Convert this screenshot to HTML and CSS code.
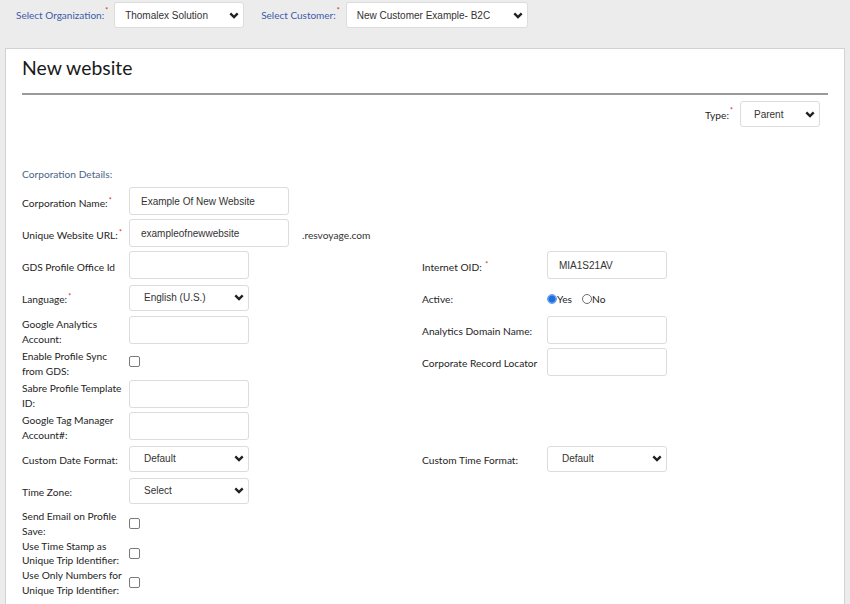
FILE: index.html
```html
<!DOCTYPE html>
<html>
<head>
<meta charset="utf-8">
<link rel="stylesheet" href="styles.css">
</head>
<body>
<div class="topbar">
  <span class="top-label">Select Organization:<sup class="req">*</sup></span>
  <select class="sel sel-top sel-org"><option>Thomalex Solution</option></select>
  <span class="top-label top-label-2">Select Customer:<sup class="req">*</sup></span>
  <select class="sel sel-top sel-cust"><option>New Customer Example- B2C</option></select>
</div>

<div class="card">
  <h1 class="title">New website</h1>
  <div class="rule"></div>

  <div class="type-row">
    <span class="type-lbl">Type:<sup class="req">*</sup></span>
    <select class="sel sel-type"><option>Parent</option></select>
  </div>

  <div class="section-title">Corporation Details:</div>

  <div class="form">
    <div class="row">
      <div class="lbl">Corporation Name:<sup class="req">*</sup></div>
      <div class="field"><input class="inp inp-wide" type="text" value="Example Of New Website"></div>
    </div>
    <div class="row">
      <div class="lbl">Unique Website URL:<sup class="req">*</sup></div>
      <div class="field"><input class="inp inp-wide" type="text" value="exampleofnewwebsite"><span class="suffix">.resvoyage.com</span></div>
    </div>
    <div class="row">
      <div class="lbl">GDS Profile Office Id</div>
      <div class="field"><input class="inp" type="text"></div>
      <div class="lbl">Internet OID: <sup class="req">*</sup></div>
      <div class="field"><input class="inp" type="text" value="MIA1S21AV"></div>
    </div>
    <div class="row">
      <div class="lbl">Language:<sup class="req">*</sup></div>
      <div class="field"><select class="sel sel-form"><option>English (U.S.)</option></select></div>
      <div class="lbl">Active:</div>
      <div class="field radios">
        <label class="radio-opt"><input type="radio" class="radio" name="active" checked>Yes</label>
        <label class="radio-opt"><input type="radio" class="radio" name="active">No</label>
      </div>
    </div>
    <div class="row">
      <div class="lbl">Google Analytics Account:</div>
      <div class="field"><input class="inp" type="text"></div>
      <div class="lbl">Analytics Domain Name:</div>
      <div class="field"><input class="inp" type="text"></div>
    </div>
    <div class="row">
      <div class="lbl">Enable Profile Sync from GDS:</div>
      <div class="field"><input class="chk" type="checkbox"></div>
      <div class="lbl">Corporate Record Locator</div>
      <div class="field"><input class="inp" type="text"></div>
    </div>
    <div class="row">
      <div class="lbl">Sabre Profile Template ID:</div>
      <div class="field"><input class="inp" type="text"></div>
    </div>
    <div class="row">
      <div class="lbl">Google Tag Manager Account#:</div>
      <div class="field"><input class="inp" type="text"></div>
    </div>
    <div class="row">
      <div class="lbl">Custom Date Format:</div>
      <div class="field"><select class="sel sel-form"><option>Default</option></select></div>
      <div class="lbl">Custom Time Format:</div>
      <div class="field"><select class="sel sel-form"><option>Default</option></select></div>
    </div>
    <div class="row">
      <div class="lbl">Time Zone:</div>
      <div class="field"><select class="sel sel-form"><option>Select</option></select></div>
    </div>
    <div class="chk-group">
      <div class="row row-chk">
        <div class="lbl">Send Email on Profile Save:</div>
        <div class="field"><input class="chk" type="checkbox"></div>
      </div>
      <div class="row row-chk">
        <div class="lbl">Use Time Stamp as Unique Trip Identifier:</div>
        <div class="field"><input class="chk" type="checkbox"></div>
      </div>
      <div class="row row-chk">
        <div class="lbl">Use Only Numbers for Unique Trip Identifier:</div>
        <div class="field"><input class="chk" type="checkbox"></div>
      </div>
    </div>
  </div>
</div>
</body>
</html>
```

FILE: styles.css
```css
html, body {
  margin: 0;
  padding: 0;
  overflow: hidden;
  height: 604px;
}
body {
  background: #ececec;
  font-family: "Lato", "Liberation Sans", sans-serif;
  font-size: 10.2px;
  color: #1e1e1e;
}
.req {
  color: #e0201b;
  font-size: 7px;
  vertical-align: top;
  position: relative;
  top: -3px;
  margin-left: 1px;
}
.topbar {
  display: flex;
  align-items: center;
  padding: 2px 0 0 16px;
  height: 26px;
}
.top-label {
  color: #3c5ba8;
  font-size: 10px;
  margin-right: 6px;
}
.top-label-2 {
  margin-left: 17px;
  margin-right: 6px;
}
.sel {
  appearance: none;
  -webkit-appearance: none;
  font-family: "Liberation Sans", Arial, sans-serif;
  font-size: 10px;
  color: #333;
  background-color: #fff;
  border: 1px solid #dcdcdc;
  border-radius: 3px;
  height: 26px;
  margin: 0;
  outline: none;
  background-image: url("data:image/svg+xml,%3Csvg xmlns='http://www.w3.org/2000/svg' width='10' height='7' viewBox='0 0 10 7'%3E%3Cpolyline points='1.3,1.3 5,5 8.7,1.3' fill='none' stroke='%23222' stroke-width='2.4'/%3E%3C/svg%3E");
  background-repeat: no-repeat;
  background-position: right 4px center;
  background-size: 10px 7px;
}
.sel-top {
  padding: 0 20px 0 10px;
}
.sel-org { width: 130px; }
.sel-cust { width: 182px; }
.sel-type {
  width: 80px;
  padding: 0 20px 0 13px;
}
.sel-form {
  width: 120px;
  padding: 0 20px 0 14px;
}
.card {
  margin: 20px 5px 0 5px;
  background: #fff;
  border: 1px solid #d2d2d2;
  padding: 7px 16px 60px 16px;
}
.title {
  margin: 0;
  font-size: 19.4px;
  line-height: 24px;
  font-weight: 400;
  color: #1a1a1a;
}
.rule {
  margin-top: 13px;
  border-top: 2px solid #9a9a9a;
}
.type-row {
  display: flex;
  justify-content: flex-end;
  align-items: center;
  margin-top: 6px;
  padding-right: 8px;
}
.type-lbl {
  margin-right: 7px;
  padding-top: 2px;
}
.section-title {
  margin-top: 41px;
  line-height: 12px;
  color: #4b6486;
}
.form {
  margin-top: 7px;
  display: flex;
  flex-direction: column;
  gap: 4.2px;
}
.row {
  display: grid;
  grid-template-columns: 107px 293px 125px 1fr;
  grid-template-rows: 28px;
  align-items: center;
  height: 28px;
}
.lbl {
  line-height: 15px;
  padding-top: 4px;
  padding-right: 4px;
}
.chk-group {
  display: flex;
  flex-direction: column;
  margin-top: 0.3px;
}
.row-chk {
  height: 29.5px;
  grid-template-rows: 29.5px;
}
.row-chk .lbl {
  line-height: 14.5px;
  padding-top: 0;
}
.field {
  display: flex;
  align-items: center;
}
.inp {
  box-sizing: border-box;
  width: 120px;
  height: 28px;
  margin: 0;
  border: 1px solid #dcdcdc;
  border-radius: 3px;
  padding: 0 11px;
  font-family: "Liberation Sans", Arial, sans-serif;
  font-size: 10px;
  color: #333;
  outline: none;
}
.inp-wide {
  width: 160px;
}
.suffix {
  margin-left: 13px;
  color: #333;
  padding-top: 4px;
}
.chk {
  appearance: none;
  -webkit-appearance: none;
  width: 11px;
  height: 11px;
  margin: 0;
  border: 1px solid #7a7a7a;
  border-radius: 2px;
  background: #fff;
}
.radios {
  padding-top: 2px;
}
.radio-opt {
  display: flex;
  align-items: center;
  margin-right: 10px;
}
.radio {
  appearance: none;
  -webkit-appearance: none;
  box-sizing: border-box;
  width: 10px;
  height: 10px;
  margin: 0;
  border: 1px solid #6e6e6e;
  border-radius: 50%;
  background: #fff;
}
.radio:checked {
  border-color: #5d9bf0;
  background: radial-gradient(circle, #1f6fe0 0 3.3px, #7fb0f3 3.8px);
}
```
